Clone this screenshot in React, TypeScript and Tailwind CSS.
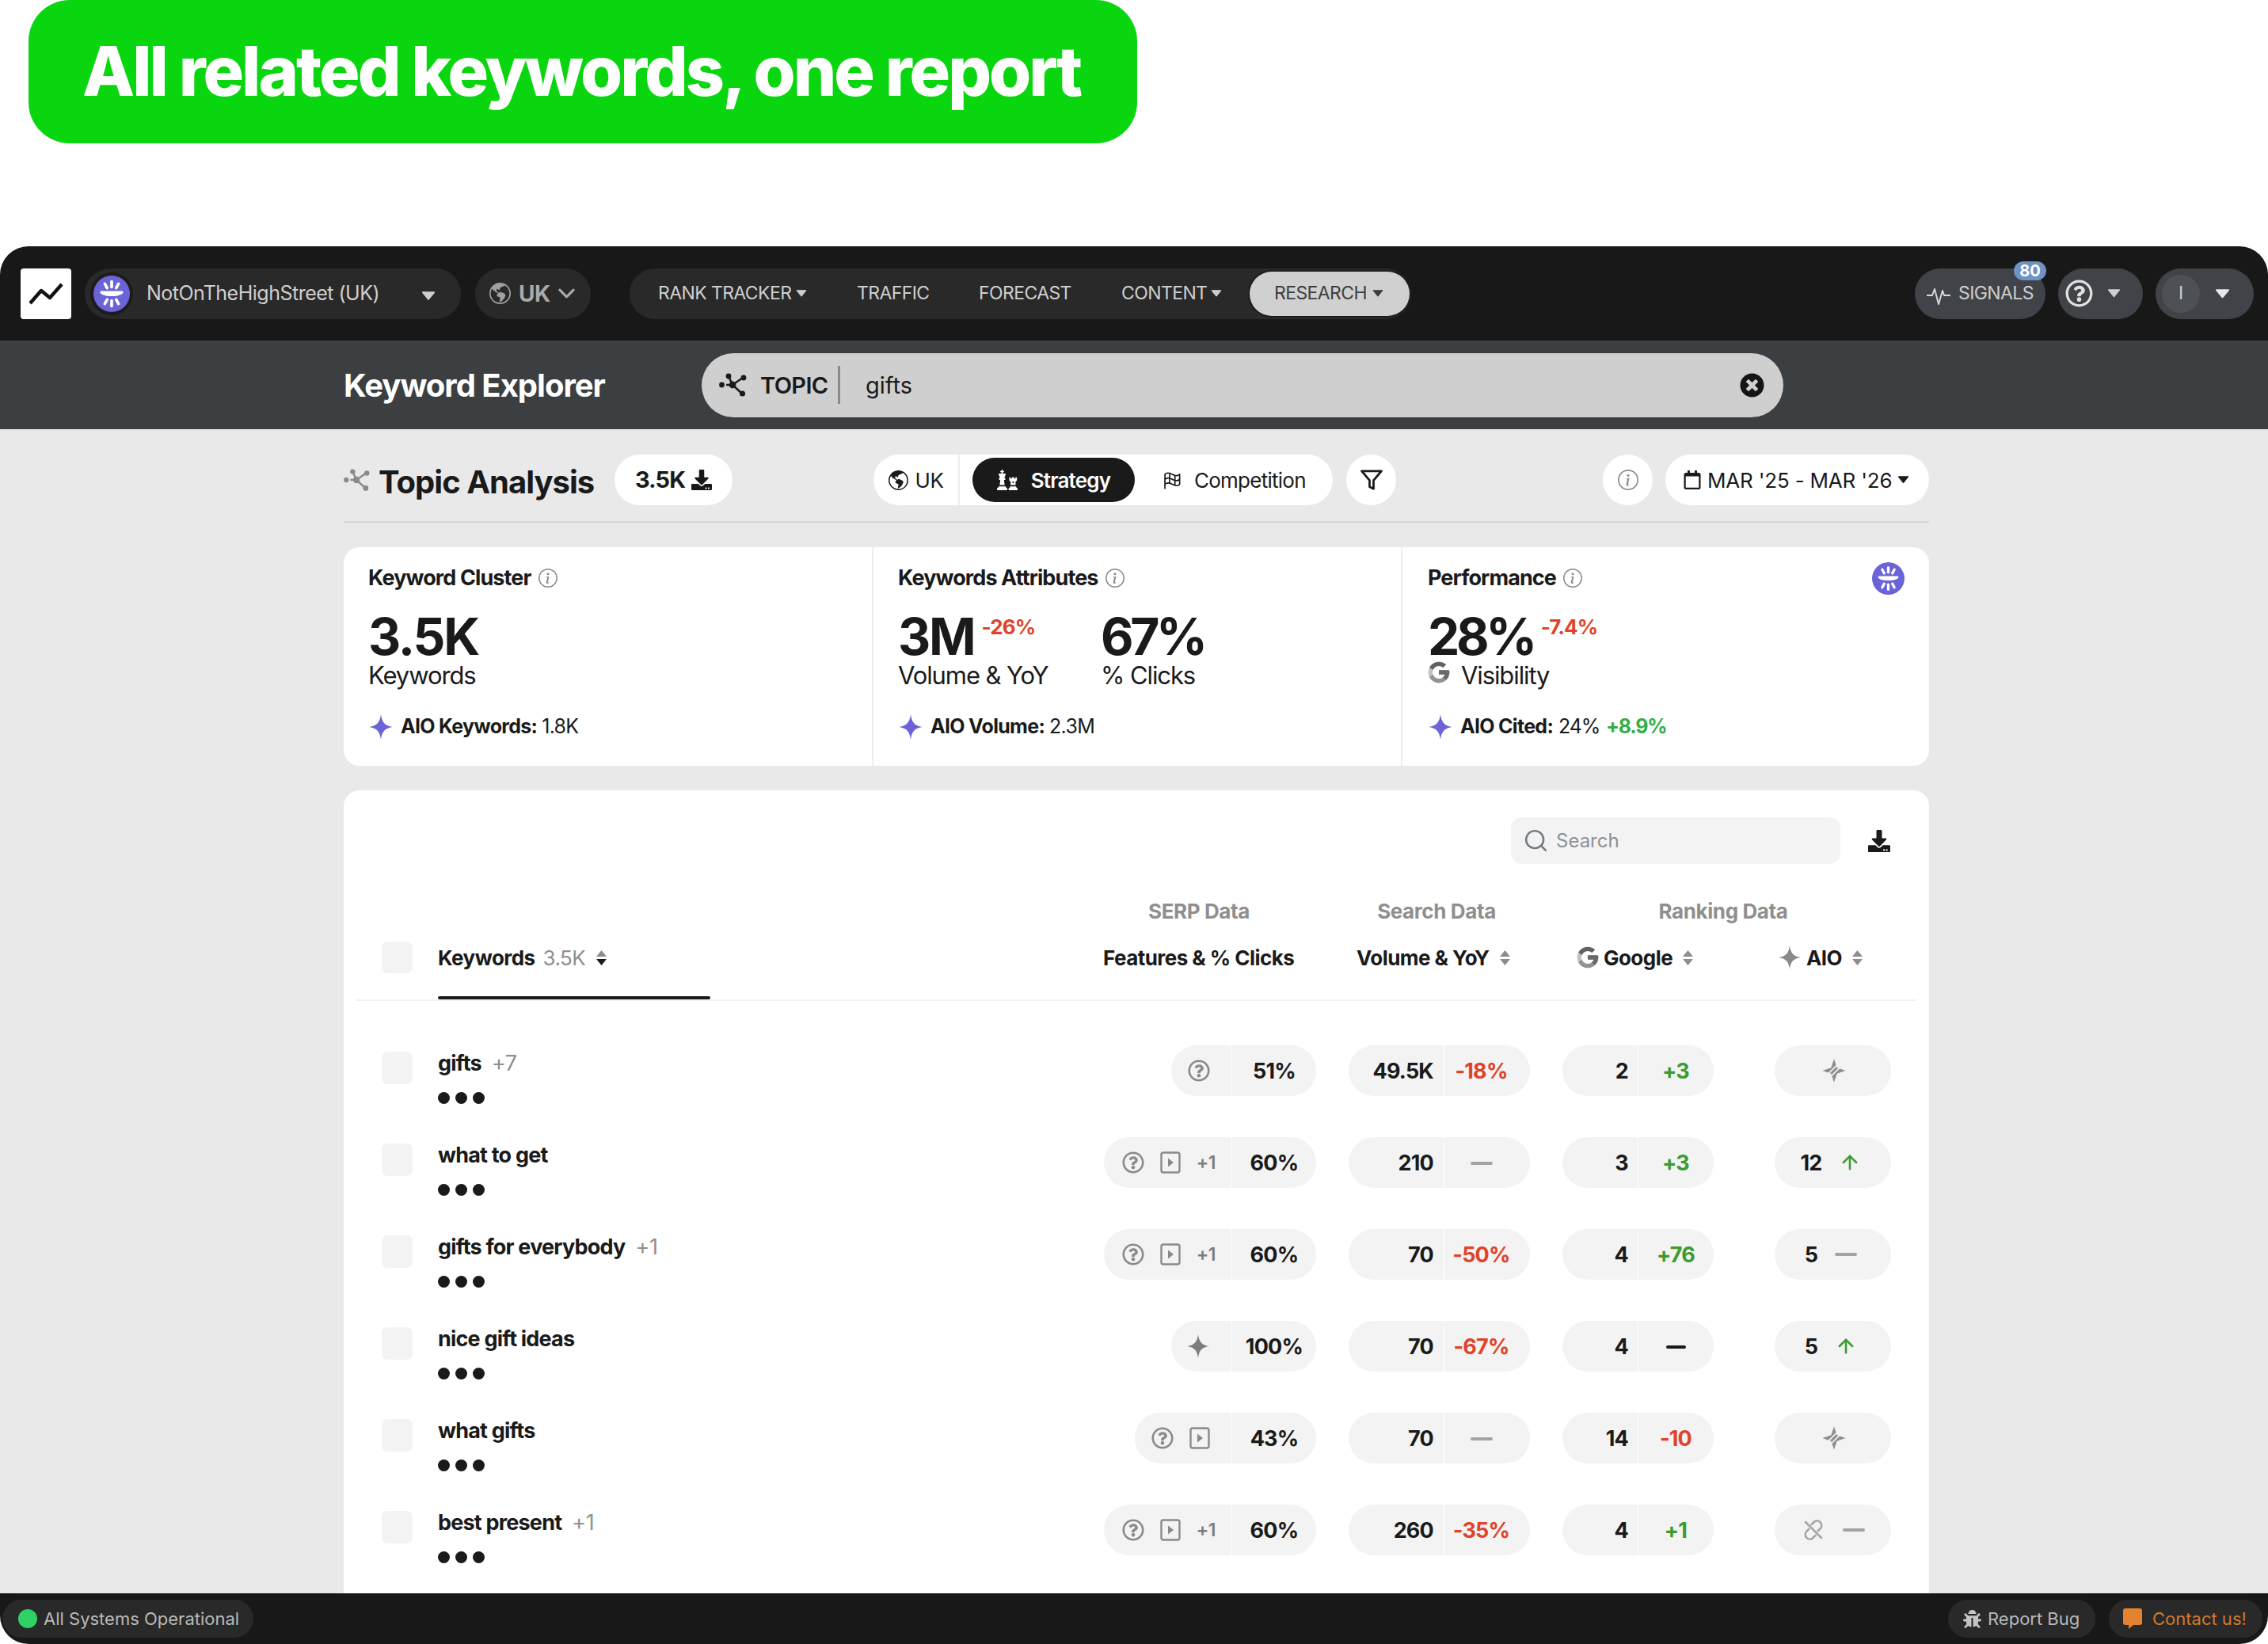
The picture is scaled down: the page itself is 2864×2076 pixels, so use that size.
import React from "react";
import { FaDownload, FaChess, FaBug, FaTimesCircle, FaRegCalendar, FaRegQuestionCircle } from "react-icons/fa";
import { BsGlobeAmericas, BsInfoCircle, BsChevronDown } from "react-icons/bs";
import { PiFlagCheckered } from "react-icons/pi";
import { FcGoogle } from "react-icons/fc";
import { LuFilter, LuSearch, LuArrowUp } from "react-icons/lu";

function BrandLogo({ size = 46 }: { size?: number }) {
  return (
    <svg width={size} height={size} viewBox="0 0 40 40" className="shrink-0">
      <circle cx="20" cy="20" r="20" fill="#6b63d8" />
      <g stroke="#fff" strokeWidth="3.2" strokeLinecap="round" fill="none">
        <path d="M20 6.5v6" />
        <path d="M12.5 9l2.5 4.5" />
        <path d="M27.5 9L25 13.5" />
        <path d="M20 27.5v6" />
        <path d="M15 26.5L12.5 31" />
        <path d="M25 26.5l2.5 4.5" />
      </g>
      <path d="M9 17h22c2 0 2 1.5 1 2.5-2 1.5-4 3-12 3s-10-1.5-12-3c-1-1-1-2.5 1-2.5z" fill="#fff" />
    </svg>
  );
}

function Caret({ w = 16, color = "#ddd" }: { w?: number; color?: string }) {
  return (
    <svg width={w} height={w * 0.62} viewBox="0 0 16 10" className="shrink-0">
      <path d="M1.5 1h13L8 9z" fill={color} stroke={color} strokeWidth="1.5" strokeLinejoin="round" />
    </svg>
  );
}

function Sort({ top = "#8c8c8c", bottom = "#8c8c8c" }: { top?: string; bottom?: string }) {
  return (
    <svg width="15" height="21" viewBox="0 0 15 21" className="shrink-0">
      <path d="M7.5 1L14 9H1z" fill={top} />
      <path d="M7.5 20L14 12H1z" fill={bottom} />
    </svg>
  );
}

function Star({ size = 30, color = "#6b63d8" }: { size?: number; color?: string }) {
  return (
    <svg width={size} height={size} viewBox="0 0 24 24" className="shrink-0">
      <path d="M12 0C12.9 7.5 15.8 10.9 23 12 15.8 13.1 12.9 16.5 12 24 11.1 16.5 8.2 13.1 1 12 8.2 10.9 11.1 7.5 12 0Z" fill={color} />
    </svg>
  );
}

function SlashStar() {
  return (
    <svg width="32" height="32" viewBox="0 0 24 24">
      <path d="M12 1L14.8 9.2 23 12 14.8 14.8 12 23 9.2 14.8 1 12 9.2 9.2Z" fill="#8f8f8f" />
      <path d="M4.5 17L17 4.5M7 19.5L19.5 7" stroke="#f3f3f3" strokeWidth="1.3" />
    </svg>
  );
}

function UnlinkIcon() {
  return (
    <svg width="30" height="30" viewBox="0 0 24 24" fill="none" stroke="#a3a3a3" strokeWidth="2" strokeLinecap="round">
      <path d="M10 6.5l2.5-2.5a4.6 4.6 0 016.5 6.5L16.5 13" />
      <path d="M14 17.5L11.5 20A4.6 4.6 0 015 13.5L7.5 11" />
      <path d="M4 4l16 16" />
    </svg>
  );
}

function TopicIcon({ color = "#1a1a1a", size = 36 }: { color?: string; size?: number }) {
  return (
    <svg width={size} height={size} viewBox="0 0 36 36" className="shrink-0">
      <g stroke={color} strokeWidth="2.6" fill="none">
        <path d="M9 18h8" />
        <path d="M17 18L30 9" />
        <path d="M17 18l12 11" />
        <path d="M17 18L12 7" />
      </g>
      <circle cx="3.5" cy="18" r="3.4" fill={color} />
      <circle cx="17" cy="18" r="4.4" fill={color} />
      <circle cx="12" cy="7" r="3.4" fill={color} />
      <circle cx="31" cy="9" r="3.4" fill={color} />
      <circle cx="29.5" cy="29" r="3.6" fill={color} />
    </svg>
  );
}

function VideoIcon() {
  return (
    <svg width="26" height="28" viewBox="0 0 26 28" className="shrink-0">
      <rect x="1.5" y="1.5" width="23" height="25" rx="2.5" fill="none" stroke="#8a8a8a" strokeWidth="2.4" />
      <path d="M10 8.5l7 5.5-7 5.5z" fill="#8a8a8a" />
    </svg>
  );
}

function Wave() {
  return (
    <svg width="32" height="30" viewBox="0 0 32 30" className="shrink-0">
      <path d="M1 17h7l3-8 5 19 5-17 2 6h8" fill="none" stroke="#d8d8d8" strokeWidth="2" strokeLinejoin="round" />
    </svg>
  );
}

function Bubble() {
  return (
    <svg width="24" height="27" viewBox="0 0 24 27" className="shrink-0">
      <path d="M3 0h18a3 3 0 013 3v15a3 3 0 01-3 3H13l-6 5v-5H3a3 3 0 01-3-3V3a3 3 0 013-3z" fill="#e58231" />
    </svg>
  );
}

type Feature = "q" | "v" | "+1" | "ai";

function Dash({ tone }: { tone: "dark" | "gray" }) {
  return <div className={tone === "dark" ? "w-[25px] h-[4px] rounded-sm bg-[#1a1a1a]" : "w-[28px] h-[4px] rounded-sm bg-[#a3a3a3]"} />;
}

function Delta({ text }: { text: string }) {
  if (text === "-") return <Dash tone="gray" />;
  if (text === "--") return <Dash tone="dark" />;
  return <span className={text.startsWith("+") ? "text-[#3a9c30]" : "text-[#e0432a]"}>{text}</span>;
}

function FeaturesPill({ items, pct }: { items: Feature[]; pct: string }) {
  const cls = items.includes("+1")
    ? "flex items-center gap-[20px] pl-[23px] pr-[20px]"
    : items.includes("ai")
      ? "flex items-center pl-[19px] pr-[27px]"
      : "flex items-center gap-[20px] pl-[21px] pr-[27px]";
  return (
    <div className="flex h-[64px] rounded-full bg-[#f3f3f3]">
      <div className={cls}>
        {items.map((it) => {
          if (it === "q") return <FaRegQuestionCircle key={it} size={28} color="#8a8a8a" />;
          if (it === "v") return <VideoIcon key={it} />;
          if (it === "ai") return <Star key={it} size={30} color="#7d7d7d" />;
          return <span key={it} className="text-[23px] font-semibold tracking-[-0.5px] text-[#7d7d7d]">{it}</span>;
        })}
      </div>
      <div className="w-[107px] pt-[2px] border-l border-white flex items-center justify-center text-[27px] font-bold tracking-[-0.8px] text-[#1a1a1a]">
        {pct}
      </div>
    </div>
  );
}

function SplitPill({ w, left, right, leftW, pr, rightPad }: { w: string; left: string; right: string; leftW: string; pr: string; rightPad: string }) {
  return (
    <div className={"flex h-[64px] pt-[2px] rounded-full bg-[#f3f3f3] text-[27px] font-bold tracking-[-0.8px] " + w}>
      <div className={"flex items-center justify-end text-[#1a1a1a] " + leftW + " " + pr}>{left}</div>
      <div className={"flex-1 flex items-center justify-center relative " + rightPad}>
        <div className="absolute left-0 -top-[2px] w-px h-[64px] bg-white" />
        <Delta text={right} />
      </div>
    </div>
  );
}

type Aio =
  | { kind: "none" }
  | { kind: "unlink" }
  | { kind: "rank"; value: string; up: boolean };

function AioPill({ a }: { a: Aio }) {
  return (
    <div className="flex h-[64px] w-[147px] ml-[77px] rounded-full bg-[#f3f3f3] items-center text-[27px] font-bold tracking-[-0.8px] text-[#1a1a1a]">
      {a.kind === "none" && <div className="mx-auto pl-[2px]"><SlashStar /></div>}
      {a.kind === "unlink" && (
        <div className="flex items-center mx-auto gap-[22px]">
          <UnlinkIcon />
          <Dash tone="gray" />
        </div>
      )}
      {a.kind === "rank" && (
        <>
          <span className="ml-[10px] w-[72px] pt-[2px] text-center">{a.value}</span>
          {a.up ? (
            <div className={a.value === "12" ? "-ml-[1px]" : "-ml-[6px]"}>
              <LuArrowUp size={28} color="#3a9c30" strokeWidth={2.2} />
            </div>
          ) : (
            <div className="-ml-[6px]"><Dash tone="gray" /></div>
          )}
        </>
      )}
    </div>
  );
}

type Row = {
  kw: string;
  extra?: string;
  feats: Feature[];
  pct: string;
  vol: string;
  yoy: string;
  rank: string;
  chg: string;
  aio: Aio;
};

const rows: Row[] = [
  { kw: "gifts", extra: "+7", feats: ["q"], pct: "51%", vol: "49.5K", yoy: "-18%", rank: "2", chg: "+3", aio: { kind: "none" } },
  { kw: "what to get", feats: ["q", "v", "+1"], pct: "60%", vol: "210", yoy: "-", rank: "3", chg: "+3", aio: { kind: "rank", value: "12", up: true } },
  { kw: "gifts for everybody", extra: "+1", feats: ["q", "v", "+1"], pct: "60%", vol: "70", yoy: "-50%", rank: "4", chg: "+76", aio: { kind: "rank", value: "5", up: false } },
  { kw: "nice gift ideas", feats: ["ai"], pct: "100%", vol: "70", yoy: "-67%", rank: "4", chg: "--", aio: { kind: "rank", value: "5", up: true } },
  { kw: "what gifts", feats: ["q", "v"], pct: "43%", vol: "70", yoy: "-", rank: "14", chg: "-10", aio: { kind: "none" } },
  { kw: "best present", extra: "+1", feats: ["q", "v", "+1"], pct: "60%", vol: "260", yoy: "-35%", rank: "4", chg: "+1", aio: { kind: "unlink" } },
];

function CardTitle({ children }: { children: string }) {
  return (
    <div className="flex items-center gap-[9px] h-[34px] mt-[22px] text-[27px] font-bold tracking-[-0.9px] text-[#1a1a1a]">
      {children}
      <BsInfoCircle size={24} color="#8a8a8a" />
    </div>
  );
}

function Metric({ value, delta, label, icon, width }: { value: string; delta?: string; label: string; icon?: React.ReactNode; width: string }) {
  const spacing = value.endsWith("%") ? "tracking-[-4.4px]" : "tracking-[-2.2px]";
  return (
    <div className={width}>
      <div className="flex h-[60px] items-start">
        <span className={"text-[64px] leading-[60px] font-bold text-[#1a1a1a] " + spacing}>{value}</span>
        {delta && <span className="ml-[9px] mt-[2px] text-[26px] leading-[32px] font-bold tracking-[-0.9px] text-[#e0432a]">{delta}</span>}
      </div>
      <div className="flex items-center gap-[12px] h-[38px] text-[31px] leading-[38px] tracking-[-1.1px] text-[#1a1a1a]">
        {icon}
        {label}
      </div>
    </div>
  );
}

function AioLine({ children }: { children: React.ReactNode }) {
  return (
    <div className="flex items-center gap-[9px] h-[34px] mt-[29px] text-[25px] tracking-[-0.7px] text-[#1a1a1a]">
      <Star size={32} />
      {children}
    </div>
  );
}

export default function App() {
  return (
    <div className="w-[2864px] h-[2076px] overflow-hidden bg-white flex flex-col [font-family:Inter,sans-serif]">
      <div className="ml-[36px] w-[1400px] h-[181px] shrink-0 rounded-[52px] bg-[#0ad60f] flex items-center pl-[68px]">
        <h1 className="text-[86px] font-extrabold tracking-[-3px] text-white whitespace-nowrap">All related keywords, one report</h1>
      </div>

      <div className="mt-[130px] flex-1 min-h-0 flex flex-col rounded-[36px] overflow-hidden">
        {/* Top navigation */}
        <div className="h-[119px] shrink-0 bg-[#181818] flex items-center pl-[26px] pr-[18px] text-[#cfcfcf]">
          <div className="w-[64px] h-[64px] rounded-[4px] bg-white flex items-center justify-center">
            <svg width="48" height="34" viewBox="0 0 48 34">
              <path d="M4 29L18 13l11 9L44 5" fill="none" stroke="#111" strokeWidth="4.4" strokeLinejoin="round" />
            </svg>
          </div>
          <div className="ml-[17px] w-[475px] h-[64px] rounded-full bg-[#292929] flex items-center pl-[11px]">
            <div className="rounded-full ring-4 ring-[#1c1c1c]"><BrandLogo /></div>
            <span className="ml-[21px] w-[294px] text-[25px] tracking-[-0.5px] whitespace-nowrap">NotOnTheHighStreet (UK)</span>
            <div className="ml-[53px] mt-[6px]"><Caret w={18} color="#cfcfcf" /></div>
          </div>
          <div className="ml-[18px] w-[146px] h-[64px] rounded-full bg-[#292929] flex items-center pl-[18px] text-[#a9a9a9]">
            <BsGlobeAmericas size={27} color="#a0a0a0" />
            <span className="ml-[10px] text-[28px] font-bold tracking-[-0.5px]">UK</span>
            <div className="ml-[9px]"><BsChevronDown size={23} color="#a9a9a9" strokeWidth={1.2} /></div>
          </div>
          <div className="ml-[49px] w-[987px] h-[64px] rounded-full bg-[#292929] flex items-center pl-[36px] text-[23px] tracking-[-0.6px] whitespace-nowrap">
            <span className="w-[167px] shrink-0">RANK TRACKER</span>
            <div className="ml-[7px]"><Caret w={14} color="#cfcfcf" /></div>
            <span className="ml-[63px] w-[90px] shrink-0">TRAFFIC</span>
            <span className="ml-[64px] w-[116px] shrink-0">FORECAST</span>
            <span className="ml-[64px] w-[106px] shrink-0">CONTENT</span>
            <div className="ml-[7px]"><Caret w={14} color="#cfcfcf" /></div>
            <div className="ml-[35px] w-[202px] shrink-0 h-[56px] rounded-full bg-[#d0d0d0] text-[#3c3f42] flex items-center pl-[31px] shadow-[0_0_0_2px_#1e1e1e]">
              <span className="w-[116px] shrink-0">RESEARCH</span>
              <div className="ml-[8px]"><Caret w={14} color="#3c3f42" /></div>
            </div>
          </div>
          <div className="ml-auto relative w-[165px] h-[64px] rounded-full bg-[#404347] flex items-center pl-[14px] gap-[9px] text-[23px] tracking-[-0.6px]">
            <Wave />
            SIGNALS
            <div className="absolute -top-[9px] -right-px w-[41px] h-[24px] rounded-full bg-[#6e93c4] text-white text-[20px] font-bold tracking-normal flex items-center justify-center">80</div>
          </div>
          <div className="ml-[16px] w-[107px] h-[64px] rounded-full bg-[#404347] flex items-center pl-[9px]">
            <FaRegQuestionCircle size={35} color="#e0e0e0" />
            <div className="ml-[18px]"><Caret w={17} color="#cfcfcf" /></div>
          </div>
          <div className="ml-[16px] w-[124px] h-[64px] rounded-full bg-[#404347] flex items-center pl-[8px]">
            <div className="w-[48px] h-[48px] rounded-full bg-[#4d5055] flex items-center justify-center text-[23px] text-[#cfcfcf]">I</div>
            <div className="ml-[19px]"><Caret w={19} color="#e8e8e8" /></div>
          </div>
        </div>

        {/* Sub bar */}
        <div className="h-[112px] shrink-0 bg-[#3c3f42] flex items-center pl-[434px]">
          <div className="w-[452px] pt-[2px] text-[40px] font-bold tracking-[-1px] text-white">Keyword Explorer</div>
          <div className="w-[1366px] h-[81px] rounded-full bg-[#cfcfcf] flex items-center pl-[22px] pr-[24px] text-[#1a1a1a]">
            <TopicIcon />
            <span className="ml-[16px] w-[84px] pt-[2px] text-[29px] font-semibold tracking-[-0.6px]">TOPIC</span>
            <div className="ml-[14px] w-[3px] h-[48px] bg-[#8a8a8a]" />
            <span className="ml-[32px] pt-[2px] text-[29px] flex-1">gifts</span>
            <FaTimesCircle size={31} color="#151515" />
          </div>
        </div>

        {/* Main */}
        <div className="flex-1 min-h-0 bg-[#e9e9e9] pl-[434px] pr-[428px] pt-[32px] flex flex-col overflow-hidden">
          <div className="flex items-center h-[64px] shrink-0">
            <div className="w-[342px] flex items-center gap-[10px]">
              <TopicIcon color="#8a8a8a" size={34} />
              <span className="mt-[5px] text-[40px] font-bold tracking-[-1px] text-[#1a1a1a] whitespace-nowrap">Topic Analysis</span>
            </div>
            <div className="w-[149px] h-[64px] rounded-full bg-white flex items-center justify-center gap-[8px] text-[29px] font-bold tracking-[-1px] text-[#1a1a1a]">
              3.5K <FaDownload size={26} color="#1a1a1a" />
            </div>
            <div className="ml-[178px] w-[580px] h-[64px] rounded-full bg-white flex items-center text-[26px] tracking-[-0.5px] text-[#1a1a1a]">
              <div className="w-[109px] h-full border-r-2 border-[#eee] flex items-center justify-center gap-[9px]">
                <BsGlobeAmericas size={25} color="#1a1a1a" />
                UK
              </div>
              <div className="ml-[16px] w-[205px] h-[56px] rounded-full bg-[#1a1a1a] text-white font-semibold tracking-[-0.8px] flex items-center justify-center gap-[17px]">
                <FaChess size={26} color="#fff" />
                Strategy
              </div>
              <div className="ml-[33px] flex items-center gap-[15px] tracking-[-0.75px]">
                <PiFlagCheckered size={27} color="#1a1a1a" />
                Competition
              </div>
            </div>
            <div className="ml-[17px] w-[63px] h-[64px] rounded-full bg-white flex items-center justify-center">
              <LuFilter size={30} color="#1a1a1a" strokeWidth={2.2} />
            </div>
            <div className="ml-[261px] w-[63px] h-[64px] rounded-full bg-white flex items-center justify-center">
              <BsInfoCircle size={26} color="#8a8a8a" />
            </div>
            <div className="ml-[16px] w-[333px] h-[64px] rounded-full bg-white flex items-center pl-[22px] text-[26px] tracking-[-0.2px] text-[#1a1a1a] whitespace-nowrap">
              <FaRegCalendar size={24} color="#1a1a1a" />
              <span className="ml-[7px]">MAR '25 - MAR '26</span>
              <div className="ml-[7px]"><Caret w={15} color="#1a1a1a" /></div>
            </div>
          </div>

          <div className="mt-[20px] h-[2px] shrink-0 bg-[#d6d6d6]" />

          {/* Cards */}
          <div className="mt-[31px] h-[276px] shrink-0 rounded-[20px] bg-white flex overflow-hidden">
            <div className="w-[667px] pl-[31px]">
              <CardTitle>Keyword Cluster</CardTitle>
              <div className="mt-[27px]"><Metric value="3.5K" label="Keywords" width="w-[300px]" /></div>
              <AioLine>
                <span className="font-bold">AIO Keywords:</span>
                <span className="-ml-[3px]">1.8K</span>
              </AioLine>
            </div>
            <div className="w-[668px] border-l-2 border-[#eee] pl-[31px]">
              <CardTitle>Keywords Attributes</CardTitle>
              <div className="mt-[27px] flex">
                <Metric value="3M" delta="-26%" label="Volume & YoY" width="w-[256px]" />
                <Metric value="67%" label="% Clicks" width="w-[200px]" />
              </div>
              <AioLine>
                <span className="font-bold">AIO Volume:</span>
                <span className="-ml-[3px]">2.3M</span>
              </AioLine>
            </div>
            <div className="flex-1 border-l-2 border-[#eee] pl-[32px] pr-[31px]">
              <div className="flex justify-between items-start">
                <CardTitle>Performance</CardTitle>
                <div className="mt-[19px]"><BrandLogo size={41} /></div>
              </div>
              <div className="mt-[23px]">
                <Metric
                  value="28%"
                  delta="-7.4%"
                  label="Visibility"
                  width="w-[400px]"
                  icon={<FcGoogle size={32} className="grayscale -mt-[8px] -ml-[2px]" />}
                />
              </div>
              <AioLine>
                <span className="font-bold">AIO Cited:</span>
                <span className="-ml-[2px] tracking-[-1.2px]">24%</span>
                <span className="-ml-[1px] font-bold tracking-[-1.2px] text-[#2faf47]">+8.9%</span>
              </AioLine>
            </div>
          </div>

          {/* Table */}
          <div className="mt-[31px] flex-1 min-h-0 rounded-t-[20px] bg-white flex flex-col overflow-hidden">
            <div className="pt-[34px] pr-[49px] flex justify-end items-center shrink-0">
              <div className="w-[416px] h-[59px] rounded-[14px] bg-[#f3f3f3] flex items-center pl-[15px] text-[24px] text-[#8b9096]">
                <LuSearch size={33} color="#737a82" strokeWidth={1.8} />
                <span className="ml-[9px]">Search</span>
              </div>
              <div className="ml-[35px]"><FaDownload size={28} color="#1a1a1a" /></div>
            </div>

            <div className="mt-[40px] flex h-[36px] shrink-0 pl-[940px] text-[26px] font-bold tracking-[-0.4px] text-[#8f8f8f] text-center">
              <div className="w-[280px]">SERP Data</div>
              <div className="ml-[20px] w-[280px]">Search Data</div>
              <div className="ml-[2px] w-[440px]">Ranking Data</div>
            </div>

            <div className="mt-[22px] flex items-center h-[40px] shrink-0 pl-[48px] text-[26px] font-bold tracking-[-0.55px] text-[#1a1a1a]">
              <div className="w-[39px] h-[40px] rounded-[7px] bg-[#f3f3f3]" />
              <div className="ml-[32px] w-[840px] flex items-center">
                Keywords
                <span className="ml-[10px] font-normal text-[#8f8f8f]">3.5K</span>
                <div className="ml-[13px]"><Sort bottom="#1a1a1a" /></div>
              </div>
              <div className="w-[320px] whitespace-nowrap">Features &amp; % Clicks</div>
              <div className="w-[278px] flex items-center gap-[12px] whitespace-nowrap">
                Volume &amp; YoY
                <Sort />
              </div>
              <div className="w-[254px] flex items-center whitespace-nowrap">
                <FcGoogle size={32} className="grayscale -ml-[2px]" />
                <span className="ml-[4px]">Google</span>
                <div className="ml-[12px]"><Sort /></div>
              </div>
              <div className="flex items-center whitespace-nowrap">
                <Star size={30} color="#8a8a8a" />
                <span className="ml-[6px]">AIO</span>
                <div className="ml-[12px]"><Sort /></div>
              </div>
            </div>

            <div className="mt-[29px] mx-[15px] border-b-2 border-[#f3f3f3] shrink-0">
              <div className="ml-[104px] w-[344px] h-[4px] rounded-sm bg-[#1a1a1a]" />
            </div>

            <div className="mt-[56px] pl-[48px] pr-[48px] flex flex-col gap-[52px]">
              {rows.map((r) => (
                <div key={r.kw} className="flex h-[64px]">
                  <div className="mt-[8px] w-[39px] h-[41px] rounded-[7px] bg-[#f3f3f3]" />
                  <div className="ml-[32px] flex-1">
                    <div className="mt-[6px] h-[34px] flex items-center gap-[13px] text-[27px] font-bold tracking-[-0.8px] text-[#1a1a1a]">
                      {r.kw}
                      {r.extra && <span className="font-normal tracking-[-0.4px] text-[#8f8f8f]">{r.extra}</span>}
                    </div>
                    <div className="mt-[19px] flex gap-[7px]">
                      <div className="w-[15px] h-[15px] rounded-full bg-[#1a1a1a]" />
                      <div className="w-[15px] h-[15px] rounded-full bg-[#1a1a1a]" />
                      <div className="w-[15px] h-[15px] rounded-full bg-[#1a1a1a]" />
                    </div>
                  </div>
                  <FeaturesPill items={r.feats} pct={r.pct} />
                  <div className="ml-[41px]">
                    <SplitPill w="w-[229px]" leftW="w-[120px]" pr="pr-[13px]" rightPad="pr-[14px]" left={r.vol} right={r.yoy} />
                  </div>
                  <div className="ml-[41px]">
                    <SplitPill w="w-[191px]" leftW="w-[95px]" pr="pr-[12px]" rightPad="" left={r.rank} right={r.chg} />
                  </div>
                  <AioPill a={r.aio} />
                </div>
              ))}
            </div>
          </div>
        </div>

        {/* Status bar */}
        <div className="h-[64px] shrink-0 bg-[#181818] flex items-center pl-[3px] pr-[7px] text-[22px]">
          <div className="w-[317px] h-[48px] rounded-full bg-[#292929] flex items-center pl-[20px] gap-[8px] text-[#b9b9b9] whitespace-nowrap">
            <div className="w-[24px] h-[24px] shrink-0 rounded-full bg-[#2fd166]" />
            All Systems Operational
          </div>
          <div className="ml-auto w-[186px] h-[48px] rounded-full bg-[#292929] flex items-center pl-[19px] gap-[8px] text-[#b9b9b9] whitespace-nowrap">
            <FaBug size={23} color="#c4c4c4" />
            Report Bug
          </div>
          <div className="ml-[17px] w-[194px] h-[48px] rounded-full bg-[#292929] flex items-center pl-[18px] gap-[13px] text-[#d27a2e] whitespace-nowrap">
            <Bubble />
            Contact us!
          </div>
        </div>
      </div>
    </div>
  );
}
